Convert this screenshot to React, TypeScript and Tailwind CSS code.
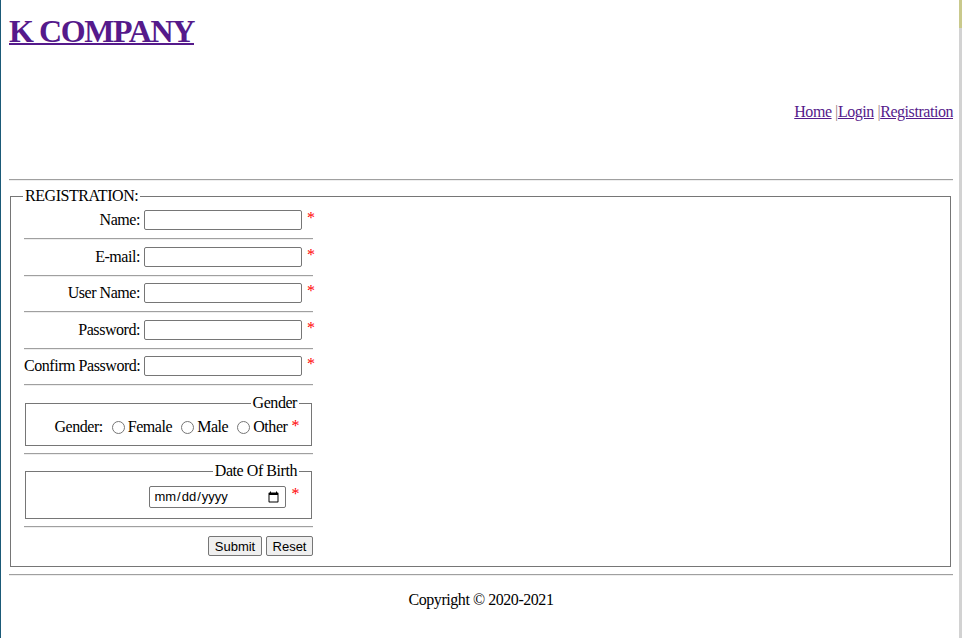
import React from 'react';

function Req() {
  return <span className="text-[#ff0000]">*</span>;
}

function Rule() {
  return <div className="mt-[5px] mb-[3.5px] h-[2px] border-t border-b border-t-[#a0a0a0] border-b-[#eeeeee]" />;
}

function Row({ label, type = 'text' }: { label: string; type?: string }) {
  return (
    <>
      <div className="flex h-[26px] items-center">
        <label className="w-[116px] shrink-0 whitespace-nowrap text-right leading-[18px]">{label}</label>
        <input
          type={type}
          className="ml-[4px] h-[20px] w-[158px] rounded-[2px] border border-[#767676] bg-white px-[2px] font-['Liberation_Sans',sans-serif] text-[13px] tracking-normal"
        />
        <span className="ml-[5px] -mt-[4px] leading-[18px]">
          <Req />
        </span>
      </div>
      <Rule />
    </>
  );
}

export default function App() {
  return (
    <div className="flex min-h-[638px] w-full bg-white font-['Liberation_Serif',serif] text-[16px] tracking-[-0.45px] text-black">
      <div className="w-[1px] shrink-0 bg-[#1b5a78]" />

      <div className="flex-1 pl-[8px] pr-[6px]">
        <h1 className="mt-[13px] text-[32px] font-bold leading-[37px] tracking-[-1.4px]">
          <a href="#" className="text-[#551a8b] underline decoration-2">
            K COMPANY
          </a>
        </h1>

        <nav className="mt-[53px] text-right leading-[18px]">
          <a href="#" className="text-[#551a8b] underline">Home</a>{' '}
          <span className="text-[#a08080]">|</span>
          <a href="#" className="text-[#551a8b] underline">Login</a>{' '}
          <span className="text-[#a08080]">|</span>
          <a href="#" className="text-[#551a8b] underline">Registration</a>
        </nav>

        <div className="mt-[58px] h-[2px] border-t border-b border-t-[#a0a0a0] border-b-[#eeeeee]" />

        <form onSubmit={(e) => e.preventDefault()}>
          <fieldset className="mt-[6px] ml-[1px] mr-[2px] border border-[#767676] px-[12px] pb-[10px]">
            <legend className="px-[2px] leading-[18px]">REGISTRATION:</legend>
            <div className="ml-[1px] w-[289px] pt-[2px]">
              <Row label="Name:" />
              <Row label="E-mail:" type="email" />
              <Row label="User Name:" />
              <Row label="Password:" type="password" />
              <Row label="Confirm Password:" type="password" />

              <fieldset className="mx-[1px] mt-[8px] h-[52px] border border-[#767676] pr-[12px]">
                <legend className="ml-auto px-[2px] leading-[18px]">Gender</legend>
                <div className="flex items-center justify-end pt-[6px] leading-[18px]">
                  <span>Gender:</span>
                  <input type="radio" name="gender" className="ml-[9px] mr-[3px] h-[13px] w-[13px]" />
                  <span>Female</span>
                  <input type="radio" name="gender" className="ml-[9px] mr-[3px] h-[13px] w-[13px]" />
                  <span>Male</span>
                  <input type="radio" name="gender" className="ml-[9px] mr-[3px] h-[13px] w-[13px]" />
                  <span>Other</span>
                  <span className="ml-[4px] -mt-[2px]">
                    <Req />
                  </span>
                </div>
              </fieldset>

              <div className="mt-[7px] h-[2px] border-t border-b border-t-[#a0a0a0] border-b-[#eeeeee]" />

              <fieldset className="mx-[1px] mt-[7px] h-[57px] border border-[#767676] pr-[12px]">
                <legend className="ml-auto px-[2px] leading-[18px]">Date Of Birth</legend>
                <div className="flex items-center justify-end pt-[6px]">
                  <input
                    type="date"
                    className="h-[22px] w-[137px] rounded-[2px] border border-[#767676] bg-white px-[3px] font-['Liberation_Sans',sans-serif] text-[13px] tracking-normal"
                  />
                  <span className="ml-[5px] -mt-[6px] leading-[18px]">
                    <Req />
                  </span>
                </div>
              </fieldset>

              <div className="mt-[7px] h-[2px] border-t border-b border-t-[#a0a0a0] border-b-[#eeeeee]" />

              <div className="mt-[8px] flex justify-end gap-[4px]">
                <button
                  type="submit"
                  className="h-[20px] w-[54px] rounded-[2px] border border-[#767676] bg-[#efefef] font-['Liberation_Sans',sans-serif] text-[13px] leading-none tracking-normal"
                >
                  Submit
                </button>
                <button
                  type="reset"
                  className="h-[20px] w-[47px] rounded-[2px] border border-[#767676] bg-[#efefef] font-['Liberation_Sans',sans-serif] text-[13px] leading-none tracking-normal"
                >
                  Reset
                </button>
              </div>
            </div>
          </fieldset>
        </form>

        <div className="mt-[7px] h-[2px] border-t border-b border-t-[#a0a0a0] border-b-[#eeeeee]" />

        <p className="mt-[15px] text-center leading-[18px]">Copyright © 2020-2021</p>
      </div>

      <div className="flex w-[3px] shrink-0 flex-col">
        <div className="h-[28px] bg-[#c9c98c]" />
        <div className="flex-1 bg-[#d2d2d2]" />
      </div>
    </div>
  );
}
